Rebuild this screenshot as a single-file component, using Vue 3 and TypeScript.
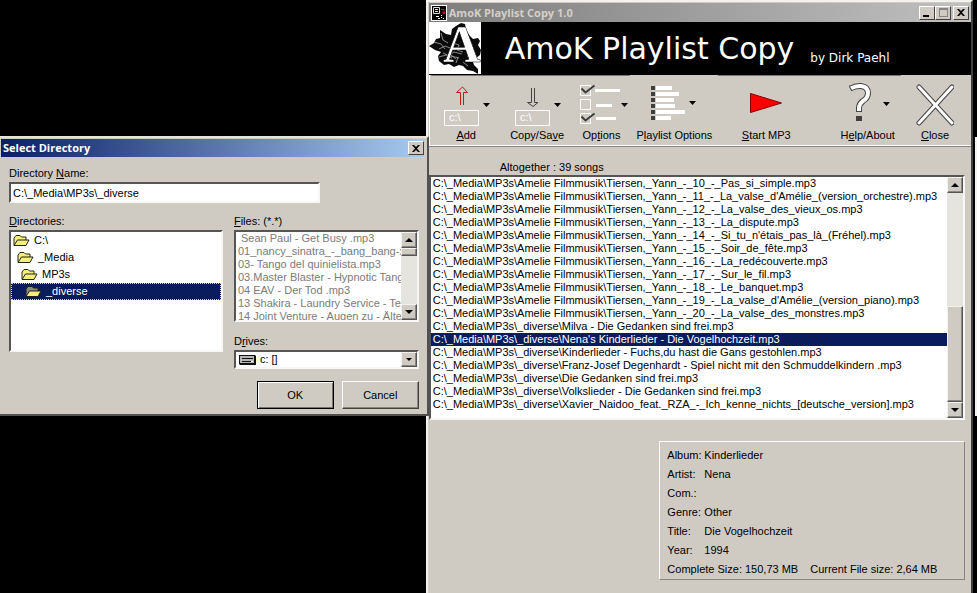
<script setup lang="ts">
import { ref } from 'vue'

const amelie = 'C:\\_Media\\MP3s\\Amelie Filmmusik\\Tiersen,_Yann_-_'
const diverse = 'C:\\_Media\\MP3s\\_diverse\\'

const songs: string[] = [
  amelie + '10_-_Pas_si_simple.mp3',
  amelie + "11_-_La_valse_d'Amélie_(version_orchestre).mp3",
  amelie + '12_-_La_valse_des_vieux_os.mp3',
  amelie + '13_-_La_dispute.mp3',
  amelie + "14_-_Si_tu_n'étais_pas_là_(Fréhel).mp3",
  amelie + '15_-_Soir_de_fête.mp3',
  amelie + '16_-_La_redécouverte.mp3',
  amelie + '17_-_Sur_le_fil.mp3',
  amelie + '18_-_Le_banquet.mp3',
  amelie + "19_-_La_valse_d'Amélie_(version_piano).mp3",
  amelie + '20_-_La_valse_des_monstres.mp3',
  diverse + 'Milva - Die Gedanken sind frei.mp3',
  diverse + "Nena's Kinderlieder - Die Vogelhochzeit.mp3",
  diverse + 'Kinderlieder - Fuchs,du hast die Gans gestohlen.mp3',
  diverse + 'Franz-Josef Degenhardt - Spiel nicht mit den Schmuddelkindern .mp3',
  diverse + 'Die Gedanken sind frei.mp3',
  diverse + 'Volkslieder - Die Gedanken sind frei.mp3',
  diverse + 'Xavier_Naidoo_feat._RZA_-_Ich_kenne_nichts_[deutsche_version].mp3',
]
const selectedSong = ref(12)

const folders: string[] = ['C:\\', '_Media', 'MP3s', '_diverse']
const selectedFolder = ref(3)

const files: string[] = [
  '\u00a0Sean Paul - Get Busy .mp3',
  '01_nancy_sinatra_-_bang_bang-x',
  '03- Tango del quinielista.mp3',
  '03.Master Blaster - Hypnotic Tango',
  '04 EAV - Der Tod .mp3',
  '13 Shakira - Laundry Service - Te.',
  '14 Joint Venture - Augen zu - Älter',
]

const directory = ref('C:\\_Media\\MP3s\\_diverse')
const drive = ref('c')

const tags: { label: string; value: string }[] = [
  { label: 'Album:', value: 'Kinderlieder' },
  { label: 'Artist:', value: 'Nena' },
  { label: 'Com.:', value: '' },
  { label: 'Genre:', value: 'Other' },
  { label: 'Title:', value: 'Die Vogelhochzeit' },
  { label: 'Year:', value: '1994' },
]
const bars: number[] = [16, 23, 18, 19, 29, 15]
</script>

<template>
  <div class="desktop">
    <section class="window dialog" aria-label="Select Directory">
      <header class="titlebar active">
        <h2>Select Directory</h2>
        <button class="cap" type="button" aria-label="Close dialog">
          <svg width="8" height="7" viewBox="0 0 8 7"><path d="M0 0h2l2 2 2-2h2L5 3.500 8 7H6L4 5 2 7H0l3-3.500z" /></svg>
        </button>
      </header>
      <div class="dialog-body">
        <div class="field name">
          <label for="dirname">Directory <u>N</u>ame:</label>
          <input id="dirname" v-model="directory" class="sunken" type="text" />
        </div>
        <div class="columns">
          <div class="field">
            <span id="dirs"><u>D</u>irectories:</span>
            <ul class="sunken folders" role="listbox" aria-labelledby="dirs">
              <li
                v-for="(folder, i) in folders"
                :key="folder"
                :class="['depth-' + i, { selected: i === selectedFolder }]"
                role="option"
                :aria-selected="i === selectedFolder"
                @click="selectedFolder = i"
              >
                <svg width="17" height="13" viewBox="0 0 17 13">
                  <path class="folder-back" d="M1 11V4l2-2.500h4L8.500 3H13v3" />
                  <path class="folder-front" d="M1 11.500L4.500 6H16l-3 5.500z" />
                </svg>
                <span>{{ folder }}</span>
              </li>
            </ul>
          </div>
          <div class="field">
            <span id="files"><u>F</u>iles: (*.*)</span>
            <div class="sunken scroller files">
              <ul aria-labelledby="files">
                <li v-for="file in files" :key="file">{{ file }}</li>
              </ul>
              <div class="scrollbar">
                <button type="button" aria-label="Scroll files up"><i class="up"></i></button>
                <span class="thumb small"></span>
                <span class="track"></span>
                <button type="button" aria-label="Scroll files down"><i class="down"></i></button>
              </div>
            </div>
            <label for="drive" class="drive-label">D<u>r</u>ives:</label>
            <div class="combo sunken">
              <svg width="17" height="10" viewBox="0 0 17 10">
                <path d="M0 0h16l1 1v9H1L0 9z" fill="#111" />
                <path d="M1 1h14v7H1z" fill="#b5b5b5" />
                <path d="M3 3h11v1H3zM3 6h9v1H3z" fill="#111" />
                <path d="M12 6h2v1h-2z" fill="#fff" />
              </svg>
              <select id="drive" v-model="drive"><option value="c">c: []</option></select>
              <span class="combo-arrow"><i class="down"></i></span>
            </div>
          </div>
        </div>
        <div class="actions">
          <button class="push default" type="button">OK</button>
          <button class="push" type="button">Cancel</button>
        </div>
      </div>
    </section>

    <main class="window player">
      <header class="titlebar">
        <svg class="app-icon" width="16" height="16" viewBox="0 0 16 16">
          <path d="M0 0h16v16H0z" fill="#fff" />
          <path d="M1 1h14v14H1z" fill="#000" />
          <path d="M2.500 2.500h6v6h-6zM4 4.500h3M4 6.500h3" fill="none" stroke="#ddd" />
          <path d="M10 4.500h3v4M11.500 7l1.500 2 1-2" fill="none" stroke="#d01020" />
          <path d="M5 11.500h3M7 13.500h2M10 12.500h1M12 13.500h1M10 10.500h1" stroke="#fff" />
        </svg>
        <h1>AmoK Playlist Copy 1.0</h1>
        <div class="captions">
          <button class="cap" type="button" aria-label="Minimize"><svg width="8" height="8" viewBox="0 0 8 8"><path d="M0 6h6v2H0z" /></svg></button>
          <button class="cap muted" type="button" aria-label="Maximize"><svg width="9" height="9" viewBox="0 0 9 9"><path d="M0 0h9v9H0zM1 2v6h7V2z" fill-rule="evenodd" /></svg></button>
          <button class="cap apart" type="button" aria-label="Close"><svg width="8" height="7" viewBox="0 0 8 7"><path d="M0 0h2l2 2 2-2h2L5 3.500 8 7H6L4 5 2 7H0l3-3.500z" /></svg></button>
        </div>
      </header>

      <div class="banner">
        <svg class="logo" width="52" height="52" viewBox="0 0 52 52">
          <path d="M0 0h52v52H0z" fill="#fff" />
          <path
            d="M11 8l6 4 5 1 1-6 4-3 5-3 4 1 1 6 4 6 3 3 5-1 2 3-2 4 3 5-1 5-4 3-3 4 1 3 4 4 0 5-5-3-6-1-4-4-4-1-5 2-5-3-5 1-5-4-1-5 3-4-6-2-6-4 5-3 2-4 4-1 0-4z"
            fill="#0a0a0a"
          />
          <path
            d="M5 20l7 2 4 5M10 27l6-3 5 2M12 11l2 7 5 3M10 35l7-2 6 3M18 39l4-5 8 2M27 41l2-6M33 32l-8-2-5 3M24 21l6 2-2 5 6 2M40 18l3 5-3 5 4 4M21 29l3-5M34 40l5 4M38 34l4 1M14 31l4 2M25 28l4-3M22 33l5 4"
            fill="none" stroke="#a9a9a9" stroke-width=".8"
          />
          <text x="14" y="40" class="initial">A</text>
        </svg>
        <p class="brand">AmoK Playlist Copy</p>
        <p class="author">by Dirk Paehl</p>
      </div>

      <nav class="toolbar">
        <button class="tool ruled menu" type="button">
          <svg width="48" height="44" viewBox="0 0 48 44">
            <path d="M16.500 23V10.500h-4L18.500 5l5 5.500h-4V23" fill="none" stroke="#c4161c" />
            <path d="M.5 28.500h34v15H.5z" class="white-line" />
            <text x="5" y="39" class="drive-text">c:\</text>
            <path d="M39 21h7l-3.500 4z" />
          </svg>
          <span><u>A</u>dd</span>
        </button>
        <button class="tool ruled menu" type="button">
          <svg width="48" height="44" viewBox="0 0 48 44">
            <path d="M16.500 6v14.500h-4l5.500 4 5-4h-3.500V6" fill="none" stroke="#444" />
            <path d="M.5 28.500h34v15H.5z" class="white-line" />
            <text x="5" y="39" class="drive-text">c:\</text>
            <path d="M39 21h7l-3.500 4z" />
          </svg>
          <span>Copy/Sa<u>v</u>e</span>
        </button>
        <button class="tool ruled menu" type="button">
          <svg width="48" height="44" viewBox="0 0 48 44">
            <path d="M.5 3.500h10v10H.5zM.5 17.500h10v10H.5zM.5 31.500h10v10H.5z" class="white-line" />
            <path d="M15 7h25v3H15zM16 22h16v3H16zM16 35h20v3H16z" fill="#fff" />
            <path d="M1.500 6.500l4 4 9-7M1.500 34.500l4 4 9-7" fill="none" stroke="#3c3c3c" stroke-width="2" />
            <path d="M41 21h7l-3.500 4z" />
          </svg>
          <span>Op<u>t</u>ions</span>
        </button>
        <button class="tool" type="button">
          <svg width="46" height="44" viewBox="0 0 46 44">
            <g v-for="(bar, i) in bars" :key="i">
              <rect x="0" :y="4 + i * 6" width="4" height="4" fill="#3f3f3f" />
              <rect x="5" :y="4 + i * 6" :width="bar" height="4" fill="#fff" />
            </g>
            <path d="M38 19h7l-3.500 4z" />
          </svg>
          <span>P<u>l</u>aylist Options</span>
        </button>
        <button class="tool ruled" type="button">
          <svg width="34" height="44" viewBox="0 0 34 44">
            <path d="M1.500 11.500v19l31-9.500z" fill="#f00" stroke="#8a0000" />
          </svg>
          <span><u>S</u>tart MP3</span>
        </button>
        <button class="tool ruled menu help" type="button">
          <svg width="42" height="44" viewBox="0 0 42 44">
            <path d="M1 6.500q6-3 11-2.500 7 1 7 7 0 5-5 8-4 3-4 7v4" fill="none" stroke="#444" stroke-width="6" />
            <path d="M2 6.300q5-2.800 10-2.300 7 1 7 7 0 5-5 8-4 3-4 7v3" fill="none" stroke="#fff" stroke-width="4" />
            <path d="M7 34h6v5H7z" fill="#3f3f3f" />
            <path d="M34 20h7l-3.500 4z" />
          </svg>
          <span>H<u>e</u>lp/About</span>
        </button>
        <button class="tool" type="button">
          <svg width="38" height="44" viewBox="0 0 38 44">
            <path d="M3 5l33 36M36 5L3 41" stroke="#444" stroke-width="5" stroke-linecap="round" />
            <path d="M3 5l33 36M36 5L3 41" stroke="#fff" stroke-width="3" stroke-linecap="round" />
          </svg>
          <span><u>C</u>lose</span>
        </button>
      </nav>

      <div class="content">
        <p id="count" class="count">Altogether : 39 songs</p>
        <div class="sunken scroller songs">
          <ul role="listbox" aria-labelledby="count">
            <li
              v-for="(song, i) in songs"
              :key="song"
              role="option"
              :aria-selected="i === selectedSong"
              :class="{ selected: i === selectedSong }"
              @click="selectedSong = i"
            >{{ song }}</li>
          </ul>
          <div class="scrollbar">
            <button type="button" aria-label="Scroll songs up"><i class="up"></i></button>
            <span class="track"></span>
            <span class="thumb"></span>
            <button type="button" aria-label="Scroll songs down"><i class="down"></i></button>
          </div>
        </div>
        <section class="info">
          <dl>
            <div v-for="tag in tags" :key="tag.label">
              <dt>{{ tag.label }}</dt>
              <dd>{{ tag.value }}</dd>
            </div>
          </dl>
          <p class="sizes"><span>Complete Size: 150,73 MB</span><span>Current File size: 2,64 MB</span></p>
        </section>
      </div>
    </main>
    <div class="behind"></div>
  </div>
</template>

<style>
body {
  background: #000;
}
</style>

<style scoped>
.desktop {
  --face: #cfcbc3;
  --navy: #0a1c5c;
  display: flex;
  align-items: flex-start;
  min-height: 100vh;
  background: #000;
  color: #000;
  font: 11px/13px "Liberation Sans", Arial, sans-serif;
}
.desktop * {
  box-sizing: border-box;
}
h1, h2, p, ul, dl, dd {
  margin: 0;
  padding: 0;
}
ul {
  list-style: none;
}
button, input, select {
  margin: 0;
  color: inherit;
  font: inherit;
  border-radius: 0;
}
.window {
  background: var(--face);
}
.dialog {
  position: relative;
  z-index: 1;
  flex: 428 1 0;
  min-width: 0;
  margin: 136px -3px 0 0;
  padding: 1px 3px 0 1px;
  border-top: 2px solid #e6e3dd;
  border-right: 2px solid #505050;
  border-bottom: 2px solid #505050;
}
.player {
  display: flex;
  flex-direction: column;
  flex: 549 1 0;
  min-width: 0;
  min-height: calc(100vh - 1px);
  padding: 1px 0 0 1px;
  border: 2px solid #404040;
  border-top-color: #f4f2ee;
  border-left-color: #f4f2ee;
}
.behind {
  width: 2px;
  height: 279px;
  margin: 137px 0 0 2px;
  background: #f4f2ee;
}

.titlebar {
  display: flex;
  align-items: center;
  height: 19px;
  padding: 0 2px;
  color: #d4d0c8;
  background: linear-gradient(90deg, #7d7d7d, #c0c0c0);
}
.titlebar.active {
  height: 18px;
  padding-right: 0;
  color: #fff;
  background: linear-gradient(90deg, #0a1f66, #a6caf0);
}
.titlebar h1, .titlebar h2 {
  flex: 1;
  font: bold 11px/16px "Open Sans", "Noto Sans", sans-serif;
  white-space: nowrap;
}
.app-icon {
  margin-right: 2px;
}
.captions {
  display: flex;
}
.cap {
  display: flex;
  align-items: center;
  justify-content: center;
  width: 16px;
  height: 14px;
  padding: 0;
  background: var(--face);
  border: 1px solid #404040;
  border-top-color: #fff;
  border-left-color: #fff;
}
.cap.muted {
  fill: #858585;
}
.cap.apart {
  margin-left: 2px;
}

.sunken {
  background: #fff;
  border: 2px solid #f8f7f5;
  border-top-color: #555;
  border-left-color: #555;
}
.dialog-body {
  padding: 10px 5px 5px 8px;
}
.field {
  display: flex;
  flex-direction: column;
  min-width: 0;
}
.field > label, .field > span {
  line-height: 13px;
  margin-bottom: 2px;
}
.name {
  width: 76%;
}
.name input {
  height: 21px;
  padding: 0 2px;
}
.columns {
  display: grid;
  grid-template-columns: 213fr 184fr;
  gap: 11px;
  margin-top: 12px;
}
.folders {
  flex: 0 0 122px;
}
.folders li {
  display: flex;
  align-items: center;
  gap: 4px;
  height: 17px;
  border: 1px solid transparent;
}
.folders span {
  line-height: 15px;
}
.depth-0 { padding-left: 1px; }
.depth-1 { padding-left: 5px; }
.depth-2 { padding-left: 9px; }
.depth-3 { padding-left: 13px; }
.folder-back, .folder-front {
  fill: #f5ee7a;
  stroke: #222;
}
.selected {
  color: #fff;
  background: var(--navy);
}
.folders .selected {
  border: 1px dotted #e0d890;
}
.selected .folder-back {
  fill: #8b8b78;
}

.scroller {
  display: flex;
}
.scroller ul {
  flex: 1;
  min-width: 0;
  overflow: hidden;
}
.scroller li {
  height: 13px;
  padding-left: 2px;
  line-height: 13px;
  white-space: pre;
}
.files {
  height: 92px;
  color: #7b7b7b;
}
.scrollbar {
  display: flex;
  flex-direction: column;
  width: 16px;
  background: #e6e4df;
}
.scrollbar button, .thumb, .combo-arrow {
  display: flex;
  flex: none;
  align-items: center;
  justify-content: center;
  height: 16px;
  padding: 0;
  background: var(--face);
  border: 1px solid #555;
  border-top-color: #f4f2ee;
  border-left-color: #f4f2ee;
  box-shadow: inset -1px -1px #8a8780;
}
.track {
  flex: 1;
}
.thumb.small {
  height: 8px;
}
.songs .thumb {
  flex: 0 0 40%;
}
.up, .down {
  border: 4px solid transparent;
}
.up {
  border-top-width: 0;
  border-bottom-color: #000;
}
.down {
  border-bottom-width: 0;
  border-top-color: #000;
}
.field > .drive-label {
  margin-top: 13px;
}
.combo {
  display: flex;
  align-items: center;
  height: 19px;
  padding-left: 3px;
}
.combo select {
  flex: 1;
  min-width: 0;
  padding: 0 4px;
  background: none;
  border: 0;
  appearance: none;
}
.combo-arrow {
  width: 16px;
  height: 15px;
}
.combo .down {
  border-width: 3px 3px 0;
}
.actions {
  display: flex;
  justify-content: flex-end;
  gap: 8px;
  margin-top: 12px;
}
.push {
  width: 77px;
  height: 28px;
  background: var(--face);
  border: 1px solid #404040;
  border-top-color: #fff;
  border-left-color: #fff;
  box-shadow: inset -1px -1px #8a8780;
}
.push.default {
  border-color: #000;
  box-shadow: inset 1px 1px #fff, inset -1px -1px #77746e;
}

.banner {
  display: flex;
  height: 53px;
  color: #fff;
  background: #000;
  font-family: "DejaVu Sans", Verdana, sans-serif;
  white-space: nowrap;
}
.initial {
  fill: #fff;
  stroke: #000;
  stroke-width: .5px;
  font: bold 52px "Liberation Serif", serif;
}
.brand {
  margin-left: 24px;
  font-size: 30px;
  line-height: 53px;
}
.author {
  align-self: flex-end;
  margin-left: 16px;
  padding-bottom: 9px;
  font-size: 12px;
  line-height: 15px;
}

.toolbar {
  display: grid;
  grid-template-columns: 71fr 71fr 58fr 88fr 96fr 87fr 68fr;
  padding: 0 2px;
  border-bottom: 1px solid #858585;
  box-shadow: inset 0 -1px #fff, inset 1px 0 #fff;
}
.tool {
  display: flex;
  flex-direction: column;
  align-items: center;
  gap: 3px;
  min-width: 0;
  height: 71px;
  padding: 6px 0 0;
  background: none;
  border: 0;
  border-top: 1px solid transparent;
  white-space: nowrap;
}
.tool.ruled {
  border-top-color: #777;
}
.tool.menu svg {
  margin-left: 4px;
}
.tool.help {
  padding-left: 20px;
}
.white-line {
  fill: none;
  stroke: #fff;
}
.drive-text {
  fill: #fff;
  font: 11px "Liberation Sans", sans-serif;
}

.content {
  display: flex;
  flex-direction: column;
  flex: 1;
  padding: 14px 6px 13px 0;
}
.count {
  margin-bottom: 1px;
  margin-left: 71px;
}
.songs {
  height: 245px;
}
.info {
  align-self: flex-end;
  width: 57%;
  margin-top: 21px;
  padding: 4px 7px 0;
  border: 1px solid #858585;
  border-top-color: #fff;
  border-left-color: #fff;
  line-height: 19px;
}
.info dl div {
  display: flex;
  height: 19px;
}
.info dt {
  width: 37px;
}
.sizes {
  display: flex;
  gap: 12px;
  white-space: nowrap;
}
</style>
